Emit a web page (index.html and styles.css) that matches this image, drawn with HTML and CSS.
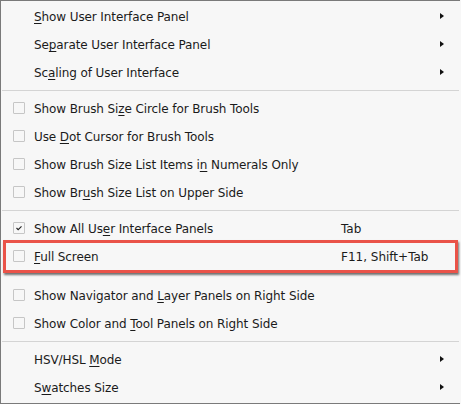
FILE: index.html
```html
<!DOCTYPE html>
<html>
<head>
<meta charset="utf-8">
<link rel="stylesheet" href="styles.css">
</head>
<body>
<div class="menu">
  <div class="item"><span class="chk none"></span><span class="label"><u>S</u>how User Interface Panel</span><span class="key"></span><span class="arrow"></span></div>
  <div class="item"><span class="chk none"></span><span class="label">Se<u>p</u>arate User Interface Panel</span><span class="key"></span><span class="arrow"></span></div>
  <div class="item"><span class="chk none"></span><span class="label">Sc<u>a</u>ling of User Interface</span><span class="key"></span><span class="arrow"></span></div>
  <div class="sep"></div>
  <div class="item"><span class="chk"></span><span class="label">Show Brush Si<u>z</u>e Circle for Brush Tools</span><span class="key"></span></div>
  <div class="item"><span class="chk"></span><span class="label">Use <u>D</u>ot Cursor for Brush Tools</span><span class="key"></span></div>
  <div class="item"><span class="chk"></span><span class="label">Show Brush Size List Items i<u>n</u> Numerals Only</span><span class="key"></span></div>
  <div class="item"><span class="chk"></span><span class="label">Show Br<u>u</u>sh Size List on Upper Side</span><span class="key"></span></div>
  <div class="sep sep2"></div>
  <div class="item"><span class="chk checked"><svg width="12" height="12" viewBox="0 0 12 12"><polyline points="3,6 5,8 9,4" fill="none" stroke="#222" stroke-width="1.3"/></svg></span><span class="label">Show All Us<u>e</u>r Interface Panels</span><span class="key">Tab</span></div>
  <div class="item marked"><span class="chk"></span><span class="label"><u>F</u>ull Screen</span><span class="key">F11, Shift+Tab</span></div>
  <div class="gap"></div>
  <div class="item"><span class="chk"></span><span class="label">Show Navigator and <u>L</u>ayer Panels on Right Side</span><span class="key"></span></div>
  <div class="item"><span class="chk"></span><span class="label">Show Color and <u>T</u>ool Panels on Right Side</span><span class="key"></span></div>
  <div class="sep"></div>
  <div class="item"><span class="chk none"></span><span class="label">HSV/HSL <u>M</u>ode</span><span class="key"></span><span class="arrow"></span></div>
  <div class="item"><span class="chk none"></span><span class="label">S<u>w</u>atches Size</span><span class="key"></span><span class="arrow"></span></div>
</div>
</body>
</html>
```
FILE: styles.css
```css
html, body {
  margin: 0;
  padding: 0;
  background: #f7f7f7;
}
.menu {
  width: 460px;
  height: 404px;
  box-sizing: border-box;
  background: #f7f7f7;
  border-top: 1px solid #7a7a7a;
  border-left: 1px solid #7a7a7a;
  border-bottom: 1px solid #7a7a7a;
  padding-top: 1px;
  display: flex;
  flex-direction: column;
  font-family: "DejaVu Sans", Tahoma, sans-serif;
  font-size: 12px;
  color: #1b1b1b;
}
.item {
  height: 28px;
  flex: none;
  display: flex;
  align-items: center;
  position: relative;
}
.chk {
  width: 10px;
  height: 10px;
  margin-left: 12px;
  margin-right: 9px;
  border: 1px solid #c6c6c6;
  border-radius: 1px;
  box-sizing: content-box;
  display: flex;
  align-items: center;
  justify-content: center;
  flex: none;
}
.chk.none {
  border-color: transparent;
}
.chk svg {
  display: block;
}
.label {
  width: 307px;
  white-space: nowrap;
  flex: none;
  padding-top: 2px;
  letter-spacing: -0.1px;
}
.key {
  width: 99px;
  flex: none;
  white-space: nowrap;
  padding-top: 2px;
}
.arrow {
  width: 0;
  height: 0;
  border-top: 3.5px solid transparent;
  border-bottom: 3.5px solid transparent;
  border-left: 4px solid #111;
  flex: none;
  margin-top: -1px;
}
u {
  text-decoration-thickness: 1px;
  text-underline-offset: 2px;
}
.sep {
  height: 8px;
  flex: none;
  display: flex;
  align-items: center;
  padding-left: 1px;
  padding-right: 1px;
}
.sep::before {
  content: "";
  display: block;
  height: 1px;
  width: 100%;
  background: #d4d4d4;
}
.gap {
  height: 11px;
  flex: none;
}
.marked::after {
  content: "";
  position: absolute;
  left: 2px;
  top: -2px;
  width: 455px;
  height: 33px;
  box-sizing: border-box;
  border: 3px solid #ea5349;
  box-shadow: 1px 2px 2px rgba(0, 0, 0, 0.55);
}
```
